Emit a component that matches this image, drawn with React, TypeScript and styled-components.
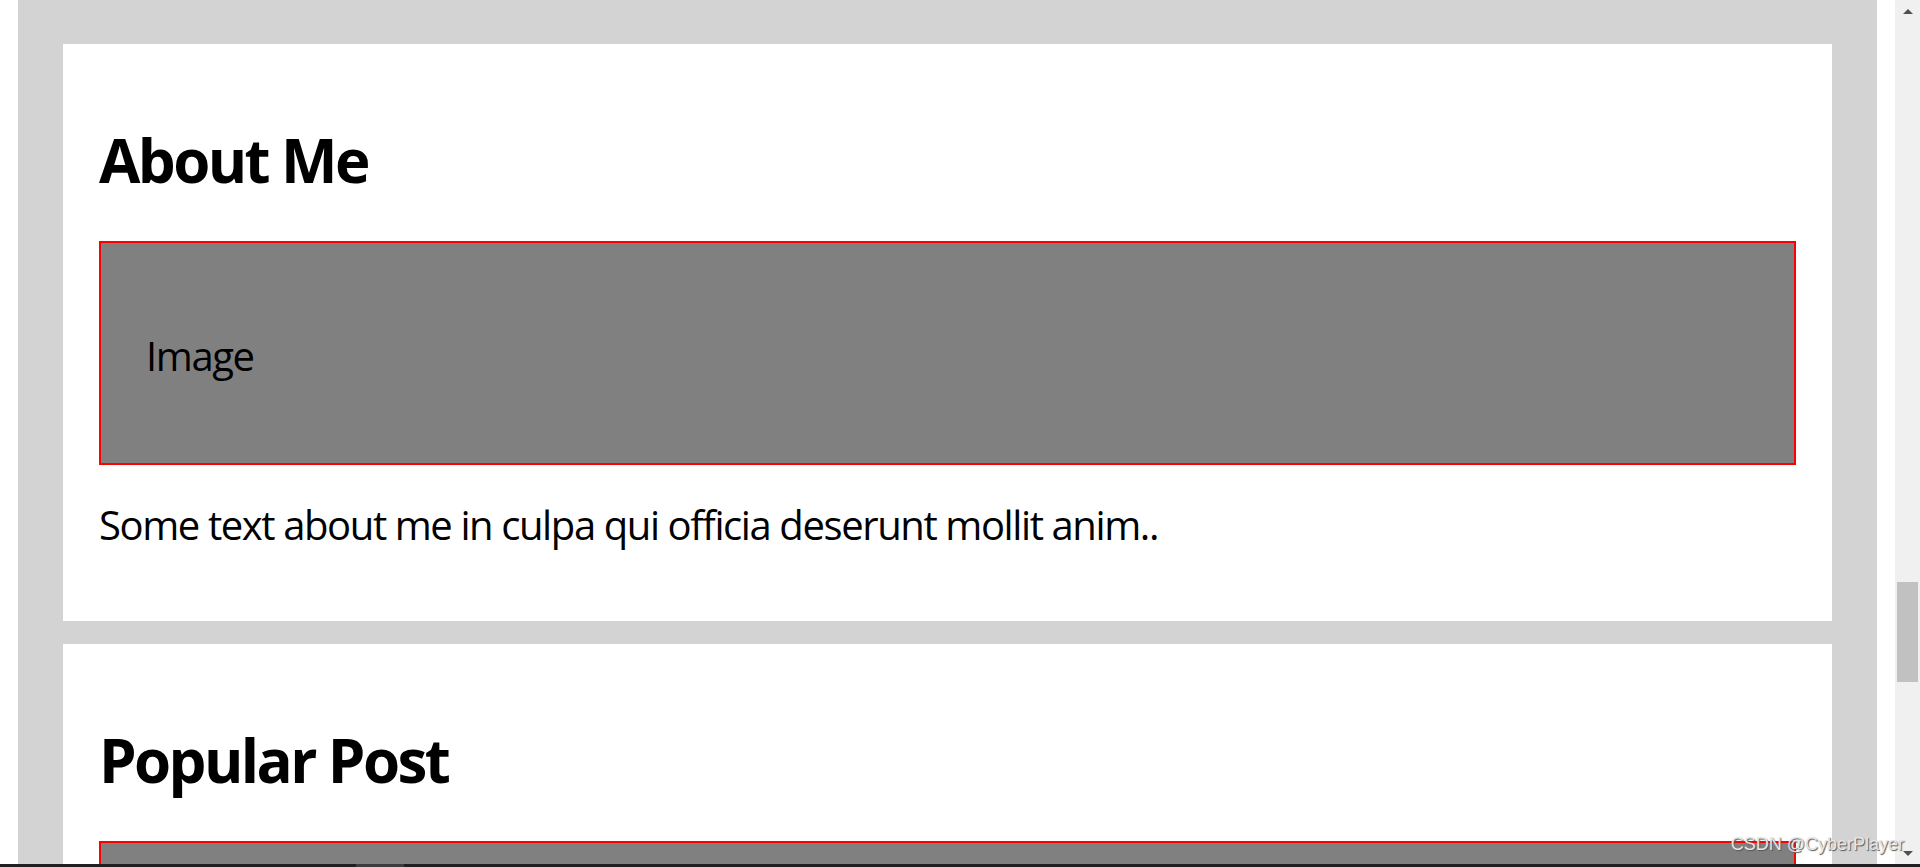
import React from 'react';
import styled, { createGlobalStyle } from 'styled-components';

const GlobalStyle = createGlobalStyle`
  html, body {
    margin: 0;
    padding: 0;
    background: #ffffff;
    overflow: hidden;
  }
  body {
    font-family: "Open Sans", "Noto Sans", sans-serif;
    color: #000000;
  }
`;

const Screen = styled.div`
  position: relative;
  width: 1920px;
  height: 867px;
  display: flex;
  flex-direction: column;
  overflow: hidden;
`;

const Viewport = styled.div`
  flex: 1;
  display: flex;
  min-height: 0;
`;

const Gutter = styled.div`
  width: 18px;
  flex-shrink: 0;
  background: #ffffff;
`;

const Main = styled.main`
  flex: 1;
  background: #d3d3d3;
  padding: 44px 45px 0;
  display: flex;
  flex-direction: column;
  gap: 23px;
  overflow: hidden;
`;

const Card = styled.section`
  background: #ffffff;
  padding: 80px 36px 72px;
  flex-shrink: 0;
`;

const Heading = styled.h2`
  margin: 0;
  font-size: 60px;
  line-height: 1.2;
  font-weight: 700;
  letter-spacing: -2.6px;
`;

const FakeImage = styled.div`
  box-sizing: border-box;
  height: 224px;
  margin-top: 45px;
  background: #808080;
  border: 2px solid #ff0000;
  padding: 89px 45px 0;
  font-size: 40px;
  line-height: 1.2;
  letter-spacing: -1.4px;
`;

const Text = styled.p`
  margin: 36px 0 0;
  font-size: 40px;
  line-height: 1.2;
  letter-spacing: -1.4px;
`;

const Scrollbar = styled.div`
  width: 25px;
  flex-shrink: 0;
  background: #f0f0f0;
  display: flex;
  flex-direction: column;
  align-items: center;
  padding-top: 9px;
  box-sizing: border-box;
`;

const Arrow = styled.div<{ $down?: boolean }>`
  width: 0;
  height: 0;
  border-left: 5px solid transparent;
  border-right: 5px solid transparent;
  ${(p) => (p.$down ? 'border-top: 5px solid #505050;' : 'border-bottom: 5px solid #505050;')}
`;

const Thumb = styled.div`
  width: 21px;
  height: 100px;
  margin-top: 568px;
  background: #c1c1c1;
`;

const Spacer = styled.div`
  flex: 1;
`;

const BottomArrow = styled.div`
  padding-bottom: 8px;
`;

const BottomBar = styled.div`
  height: 3px;
  background: #202020;
  display: flex;
`;

const BottomThumb = styled.div`
  width: 48px;
  margin-left: 356px;
  background: #3c3c3c;
`;

const Watermark = styled.div`
  position: absolute;
  right: 16px;
  bottom: 12px;
  font-family: "Liberation Sans", Arial, sans-serif;
  font-size: 18px;
  color: #e6e6e6;
  text-shadow: 1px 1px 1px #555555;
  pointer-events: none;
`;

const sections = [
  { title: 'About Me', text: 'Some text about me in culpa qui officia deserunt mollit anim..' },
  { title: 'Popular Post', text: '' },
];

export default function App() {
  return (
    <Screen>
      <GlobalStyle />
      <Viewport>
        <Gutter />
        <Main>
          {sections.map((s, i) => (
            <Card key={s.title}>
              <Heading>{s.title}</Heading>
              <FakeImage>{i === 0 ? 'Image' : ''}</FakeImage>
              {s.text && <Text>{s.text}</Text>}
            </Card>
          ))}
        </Main>
        <Gutter />
        <Scrollbar>
          <Arrow />
          <Thumb />
          <Spacer />
          <BottomArrow>
            <Arrow $down />
          </BottomArrow>
        </Scrollbar>
      </Viewport>
      <BottomBar>
        <BottomThumb />
      </BottomBar>
      <Watermark>CSDN @CyberPlayer</Watermark>
    </Screen>
  );
}
